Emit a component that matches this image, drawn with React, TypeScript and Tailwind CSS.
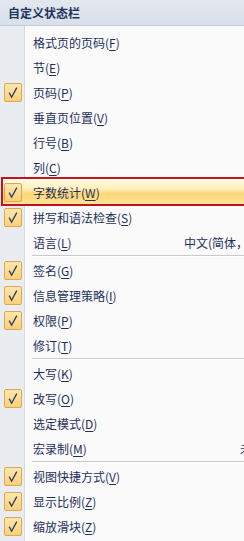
import React from "react";

type Item = {
    label: string;
    key: string;
    checked?: boolean;
    value?: string;
    active?: boolean;
    sepBefore?: boolean;
};

const items: Item[] = [
    { label: "格式页的页码", key: "F" },
    { label: "节", key: "E" },
    { label: "页码", key: "P", checked: true },
    { label: "垂直页位置", key: "V" },
    { label: "行号", key: "B" },
    { label: "列", key: "C" },
    { label: "字数统计", key: "W", checked: true, active: true },
    { label: "拼写和语法检查", key: "S", checked: true },
    { label: "语言", key: "L", value: "中文(简体，中国)" },
    { label: "签名", key: "G", checked: true, sepBefore: true },
    { label: "信息管理策略", key: "I", checked: true },
    { label: "权限", key: "P", checked: true },
    { label: "修订", key: "T" },
    { label: "大写", key: "K", sepBefore: true },
    { label: "改写", key: "O", checked: true },
    { label: "选定模式", key: "D" },
    { label: "宏录制", key: "M", value: "未录制" },
    { label: "视图快捷方式", key: "V", checked: true, sepBefore: true },
    { label: "显示比例", key: "Z", checked: true },
    { label: "缩放滑块", key: "Z", checked: true },
];

function CheckBox() {
    return (
        <div className="w-[18px] h-[19px] rounded-[2px] border border-[#e2a64e] bg-[linear-gradient(to_bottom,#fde7ae,#fbd07a)] flex items-center justify-center">
            <svg width="12" height="13" viewBox="0 0 12 13">
                <path
                    d="M2.2 6.6 L4.6 11.2 L9.8 1.6"
                    fill="none"
                    stroke="#273a63"
                    strokeWidth="1.3"
                    strokeLinejoin="miter"
                />
            </svg>
        </div>
    );
}

function Row({ item }: { item: Item }) {
    return (
        <div className="relative h-[25px] flex items-center">
            {/* selection highlight */}
            {item.active && (
                <div className="absolute left-[1px] right-0 top-[-3px] bottom-[-1px] border-2 border-[#c3141c] bg-[linear-gradient(to_bottom,#fffbe8_0%,#ffefb8_40%,#ffd677_60%,#ffe39a_100%)]" />
            )}
            <div className="relative w-[25px] flex justify-center pl-[1px]">
                {item.checked && <CheckBox />}
            </div>
            <div className="relative flex-1 pl-[8px] whitespace-nowrap">
                {item.label}(<span className="underline underline-offset-2">{item.key}</span>)
            </div>
            {item.value && (
                <div className="relative whitespace-nowrap">{item.value}</div>
            )}
        </div>
    );
}

export default function App() {
    return (
        <div
            className="w-[244px] h-[541px] overflow-hidden bg-[#fafafa] text-[12px] leading-none text-[#1d2f5a]"
            style={{ fontFamily: '"Noto Sans CJK SC", "Noto Sans", sans-serif' }}
        >
            {/* header */}
            <div className="h-[26px] flex items-center pl-[8px] bg-[linear-gradient(to_bottom,#e3e8ef,#d9e0e9)] border-b border-[#c2ccd8] font-bold text-[#1c3360]">
                自定义状态栏
            </div>

            {/* menu body with gutter */}
            <div className="w-[276px] pt-[4px] pb-[4px] bg-[linear-gradient(to_right,#e9ecf0_0px,#e9ecf0_24px,#d3d7dc_24px,#d3d7dc_25px,#ffffff_25px,#ffffff_26px,#fafafa_26px)]">
                {items.map((it, i) => (
                    <React.Fragment key={i}>
                        {it.sepBefore && (
                            <div className="h-[3px] ml-[32px]">
                                <div className="h-[1px] bg-[#c8cacd]" />
                                <div className="h-[1px] bg-white" />
                            </div>
                        )}
                        <Row item={it} />
                    </React.Fragment>
                ))}
            </div>
        </div>
    );
}
